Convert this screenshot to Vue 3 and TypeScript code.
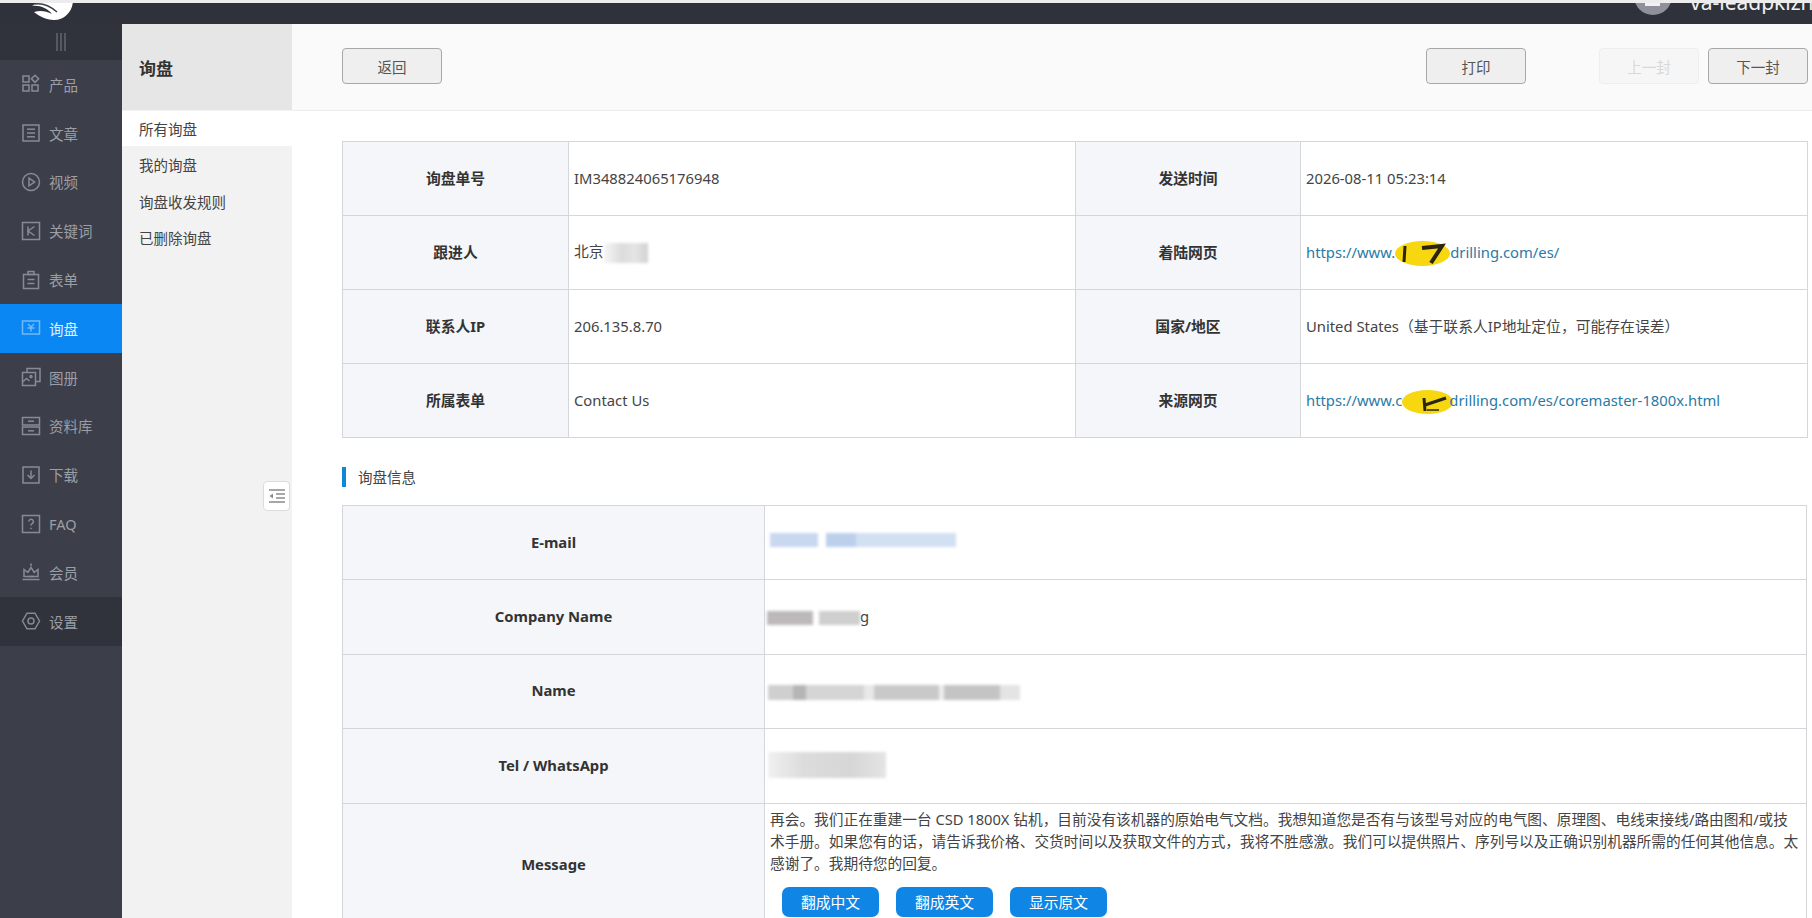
<script setup lang="ts">
interface NavItem {
  label: string
  icon: string[]
  active?: boolean
  dark?: boolean
}

const navItems: NavItem[] = [
  { label: '产品', icon: ['M2 2h6v6H2z', 'M2 11h6v6H2z', 'M11 11h6v6h-6z', 'M14 1.2l3.6 3.6-3.6 3.6-3.6-3.6z'] },
  { label: '文章', icon: ['M2 2h16v16H2z', 'M6 6.2h8', 'M6 10h8', 'M6 13.8h8'] },
  { label: '视频', icon: ['M10 1.5a8.5 8.5 0 1 0 0 17a8.5 8.5 0 1 0 0-17z', 'M8 6.2l5.6 3.8-5.6 3.8z'] },
  { label: '关键词', icon: ['M1.5 1.5h17v17h-17z', 'M7 5.5v9', 'M13.5 5.5L7 10l6.5 4.5'] },
  { label: '表单', icon: ['M2.5 4.5h15v14h-15z', 'M7 1.5h6v3H7z', 'M6.5 9.5h7', 'M6.5 13.5h7'] },
  { label: '询盘', icon: ['M1.5 3h17v13h-17z', 'M7 6l3 3 3-3', 'M6.5 10h7', 'M10 9v4.5'], active: true },
  { label: '图册', icon: ['M6 5V1.5h13v13h-4', 'M1.5 5.5h13v13h-13z', 'M1.5 15l4-3.5 3 2.5', 'M10 8.5a1 1 0 1 0 .01 0z'] },
  { label: '资料库', icon: ['M1.5 1.5h17v7.5h-17z', 'M1.5 11h17v7.5h-17z', 'M7 5.2h6', 'M7 14.8h6'] },
  { label: '下载', icon: ['M2 2h16v16H2z', 'M10 5.5v7.5', 'M6.5 10l3.5 3.5 3.5-3.5'] },
  { label: 'FAQ', icon: ['M1.5 1.5h17v17h-17z', 'M7.8 7.5a2.3 2.3 0 1 1 3.4 2.1c-.8.5-1.2.9-1.2 1.9', 'M10 13.8v1.2'] },
  { label: '会员', icon: ['M1.5 17.5h17', 'M3 7.5v7h14v-7l-3.8 3L10 5.5l-3.2 5z', 'M10 1.5v2.5', 'M7.5 14.5h5'] },
  { label: '设置', icon: ['M6 2.2h8l4.5 7.8-4.5 7.8H6L1.5 10z', 'M10 7a3 3 0 1 0 0 6a3 3 0 1 0 0-6z'], dark: true },
]

const subNav = ['我的询盘', '询盘收发规则', '已删除询盘']
const message =
  '再会。我们正在重建一台 CSD 1800X 钻机，目前没有该机器的原始电气文档。我想知道您是否有与该型号对应的电气图、原理图、电线束接线/路由图和/或技术手册。如果您有的话，请告诉我价格、交货时间以及获取文件的方式，我将不胜感激。我们可以提供照片、序列号以及正确识别机器所需的任何其他信息。太感谢了。我期待您的回复。'
</script>

<template>
  <div class="page">
    <div class="strip"></div>
    <header class="topbar">
      <svg class="logo" viewBox="0 0 42 21" width="42" height="21">
        <path d="M8 0H41C41 11 33 20 22 20C14 20 7 16 2 12C8 10 14 11 20 14C15 8 8 5 0 6C3 4 6 3 8 0Z" fill="#fff" />
        <path d="M3 4C10 3 18 6 25 12" fill="none" stroke="#3a3d46" stroke-width="1.4" />
      </svg>
      <div class="user">
        <svg class="avatar" viewBox="0 0 38 12" width="38" height="12">
          <circle cx="19" cy="-7" r="19" fill="#8f909b" />
          <rect x="11" y="0" width="15" height="3" fill="#f1f1f3" />
        </svg>
        <span class="username">va-leadpkizhn</span>
      </div>
    </header>
    <div class="body">
      <aside class="sidebar">
        <div class="collapse">
          <svg width="12" height="18" viewBox="0 0 12 18">
            <path d="M2 0v18M6 0v18M10 0v18" stroke="#7d8089" stroke-width="1" fill="none" />
          </svg>
        </div>
        <div
          v-for="item in navItems"
          :key="item.label"
          class="nav-item"
          :class="{ active: item.active, dark: item.dark }"
        >
          <svg class="nav-icon" viewBox="0 0 20 20" width="20" height="20">
            <path v-for="d in item.icon" :key="d" :d="d" />
          </svg>
          <span>{{ item.label }}</span>
        </div>
      </aside>

      <nav class="subnav">
        <div class="subnav-title">询盘</div>
        <div class="subnav-active">所有询盘</div>
        <div v-for="s in subNav" :key="s" class="subnav-item">{{ s }}</div>
        <div class="handle">
          <svg width="18" height="14" viewBox="0 0 18 14">
            <path d="M1 1h16M8 5h9M8 9h9M1 13h16" stroke="#8b8b8b" stroke-width="1.5" fill="none" />
            <path d="M5 4.5L1.5 7 5 9.5z" fill="#8b8b8b" />
          </svg>
        </div>
      </nav>

      <main class="main">
        <div class="toolbar">
          <button class="btn">返回</button>
          <div class="spacer"></div>
          <button class="btn print">打印</button>
          <button class="btn disabled">上一封</button>
          <button class="btn">下一封</button>
        </div>

        <div class="content">
          <table class="grid info">
            <colgroup>
              <col class="c1" />
              <col class="c2" />
              <col class="c3" />
              <col class="c2" />
            </colgroup>
            <tbody>
              <tr>
                <th>询盘单号</th>
                <td>IM348824065176948</td>
                <th>发送时间</th>
                <td>2026-08-11 05:23:14</td>
              </tr>
              <tr>
                <th>跟进人</th>
                <td>北京<span class="blur follower"></span></td>
                <th>着陆网页</th>
                <td>
                  <a class="link">https://www.<span class="blob">
                    <svg viewBox="0 0 55 25" width="55" height="25">
                      <path d="M10 5l-1 16" stroke="#2a2410" stroke-width="3" fill="none" />
                      <path d="M27 7l20-2L36 22" stroke="#2a2410" stroke-width="4" fill="none" />
                    </svg></span>drilling.com/es/</a>
                </td>
              </tr>
              <tr>
                <th>联系人IP</th>
                <td>206.135.8.70</td>
                <th>国家/地区</th>
                <td>United States（基于联系人IP地址定位，可能存在误差）</td>
              </tr>
              <tr>
                <th>所属表单</th>
                <td>Contact Us</td>
                <th>来源网页</th>
                <td>
                  <a class="link">https://www.c<span class="blob short">
                    <svg viewBox="0 0 51 24" width="51" height="24">
                      <path d="M22 8l1 13" stroke="#2a2410" stroke-width="3" fill="none" />
                      <path d="M23 15l21-7" stroke="#2a2410" stroke-width="3" fill="none" />
                      <path d="M25 20h12" stroke="#2a2410" stroke-width="1.5" fill="none" />
                    </svg></span>drilling.com/es/coremaster-1800x.html</a>
                </td>
              </tr>
            </tbody>
          </table>

          <h3 class="section">询盘信息</h3>

          <table class="grid detail">
            <colgroup>
              <col class="d1" />
              <col />
            </colgroup>
            <tbody>
              <tr>
                <th>E-mail</th>
                <td><span class="blur email"></span></td>
              </tr>
              <tr>
                <th>Company Name</th>
                <td><span class="blur company"></span>g</td>
              </tr>
              <tr>
                <th>Name</th>
                <td><span class="blur person"></span></td>
              </tr>
              <tr>
                <th>Tel / WhatsApp</th>
                <td><span class="blur phone"></span></td>
              </tr>
              <tr class="message-row">
                <th>Message</th>
                <td>
                  <p class="message">{{ message }}</p>
                  <div class="actions">
                    <button class="primary">翻成中文</button>
                    <button class="primary">翻成英文</button>
                    <button class="primary">显示原文</button>
                  </div>
                </td>
              </tr>
            </tbody>
          </table>
        </div>
      </main>
    </div>
  </div>
</template>

<style>
html,
body {
  margin: 0;
  height: 100%;
  overflow: hidden;
  background: #fff;
}
</style>

<style scoped>
.page {
  display: flex;
  flex-direction: column;
  height: 918px;
  overflow: hidden;
  font-family: "Noto Sans", "Noto Sans CJK SC", sans-serif;
  font-size: 14.5px;
  color: #444;
}
.strip {
  height: 3px;
  flex: none;
  background: #ececec;
}
.topbar {
  height: 21px;
  flex: none;
  display: flex;
  justify-content: space-between;
  background: #2f323b;
  overflow: hidden;
}
.logo {
  margin-left: 32px;
  margin-top: -3px;
}
.user {
  display: flex;
  align-items: flex-start;
}
.avatar {
  margin-right: 18px;
}
.username {
  width: 122px;
  overflow: hidden;
  margin-top: -13px;
  font-size: 21px;
  line-height: 24px;
  white-space: nowrap;
  color: #f0f0f2;
}
.body {
  flex: 1;
  display: flex;
  min-height: 0;
}
.sidebar {
  width: 122px;
  flex: none;
  background: #3c3f4a;
  color: #9c9ea6;
}
.collapse {
  height: 36px;
  display: flex;
  align-items: center;
  justify-content: center;
  background: #30333c;
}
.nav-item {
  height: 48.8px;
  display: flex;
  align-items: center;
  gap: 8px;
  padding-left: 21px;
  box-sizing: border-box;
}
.nav-item.active {
  background: #0a87f2;
  color: #e4f1fd;
}
.nav-item.active .nav-icon {
  color: #8cc8f8;
}
.nav-item.dark {
  background: #30333c;
}
.nav-icon {
  flex: none;
  fill: none;
  stroke: currentColor;
  stroke-width: 1.5;
  opacity: 0.8;
}
.subnav {
  position: relative;
  width: 170px;
  flex: none;
  background: #f2f2f2;
  color: #444;
}
.subnav-title {
  height: 86px;
  display: flex;
  align-items: center;
  padding-left: 17px;
  background: #e6e6e6;
  font-size: 17px;
  font-weight: 700;
  color: #333;
}
.subnav-active {
  height: 34px;
  margin: 1px 0 0.5px;
  padding: 0 0 1px 17px;
  display: flex;
  align-items: center;
  background: #fff;
}
.subnav-item {
  height: 36.5px;
  display: flex;
  align-items: center;
  padding-left: 17px;
}
.handle {
  position: absolute;
  top: 457px;
  right: 2px;
  width: 27px;
  height: 30px;
  display: flex;
  align-items: center;
  justify-content: center;
  box-sizing: border-box;
  background: #fff;
  border: 1px solid #dcdcdc;
  border-radius: 4px;
}
.main {
  flex: 1;
  min-width: 0;
}
.toolbar {
  height: 87px;
  display: flex;
  align-items: center;
  padding: 0 4px 2px 50px;
  gap: 10px;
  background: #fafafa;
  border-bottom: 1px solid #ececec;
  box-sizing: border-box;
}
.spacer {
  flex: 1;
}
.btn {
  width: 100px;
  height: 36px;
  font: inherit;
  color: #555;
  background: #efefef;
  border: 1px solid #a8a8a8;
  border-radius: 4px;
  padding: 0;
}
.btn.print {
  margin-right: 63px;
}
.btn.disabled {
  margin-right: -1px;
  color: #d8d8d8;
  background: #f6f6f6;
  border-color: #eeeeee;
}
.content {
  padding: 30px 5px 0 50px;
}
.grid {
  width: 1465px;
  table-layout: fixed;
  border-collapse: collapse;
}
.grid tr {
  height: 74.4px;
}
.grid.info tr {
  height: 74px;
}
.grid th,
.grid td {
  padding: 0 5px 2px;
  border: 1px solid #d5d6da;
  font-size: 14.8px;
  line-height: 22px;
}
.grid th {
  background: #f5f6fa;
  font-weight: 700;
  color: #333;
  text-align: center;
}
.grid td {
  color: #444;
}
.c1 {
  width: 226px;
}
.c2 {
  width: 507px;
}
.c3 {
  width: 225px;
}
.d1 {
  width: 422px;
}
.link {
  color: #2a7aa6;
}
.blob {
  display: inline-block;
  width: 55px;
  height: 25px;
  margin: -4px 0;
  vertical-align: middle;
  background: #f7d70f;
  border-radius: 50%;
}
.blob.short {
  width: 51px;
  height: 24px;
  margin: -4px -4px -4px 0;
}
.blob svg {
  display: block;
}
.blur {
  display: inline-block;
  vertical-align: middle;
  filter: blur(1.5px);
}
.follower {
  width: 44px;
  height: 20px;
  background: linear-gradient(90deg, #f6f6f6, #dcdcdc 40%, #e4e4e4 70%, #d2d2d2);
}
.email {
  width: 186px;
  height: 14px;
  margin-bottom: 6px;
  background: linear-gradient(90deg, #c8d8ef 0 26%, #fff 26% 30%, #bcd0ec 30% 46%, #d2e0f3 46% 100%);
}
.company {
  width: 93px;
  height: 14px;
  margin-left: -3px;
  background: linear-gradient(90deg, #bdb9bb 0 50%, #fff 50% 56%, #cfcfcf 56% 100%);
}
.person {
  width: 252px;
  height: 15px;
  margin-left: -2px;
  background: linear-gradient(90deg, #cfcfcf 0 10%, #b5b5b5 10% 15%, #d5d5d5 15% 38%, #e8e8e8 38% 42%, #c9c9c9 42% 68%, #eee 68% 70%, #c4c4c4 70% 92%, #e4e4e4 92%);
}
.phone {
  width: 118px;
  height: 26px;
  margin-left: -2px;
  background: linear-gradient(90deg, #f0f0f0, #dcdcdc 30%, #d6d6d6 70%, #e4e4e4);
}
.section {
  margin: 29px 0 18px;
  padding: 0 0 2px 12px;
  height: 20px;
  box-sizing: border-box;
  display: flex;
  align-items: center;
  border-left: 4px solid #0f86d8;
  font-size: 14.5px;
  font-weight: 400;
  color: #444;
}
.grid .message-row {
  height: 124px;
}
.grid .message-row td {
  padding: 4px 5px 0;
  vertical-align: top;
}
.message {
  margin: 0;
  font-size: 14.7px;
  line-height: 22px;
}
.actions {
  display: flex;
  gap: 17px;
  margin: 13px 0 0 12px;
}
.primary {
  width: 97px;
  height: 30px;
  padding: 0;
  font: inherit;
  color: #fff;
  background: #0f86e6;
  border: none;
  border-radius: 7px;
}
</style>
